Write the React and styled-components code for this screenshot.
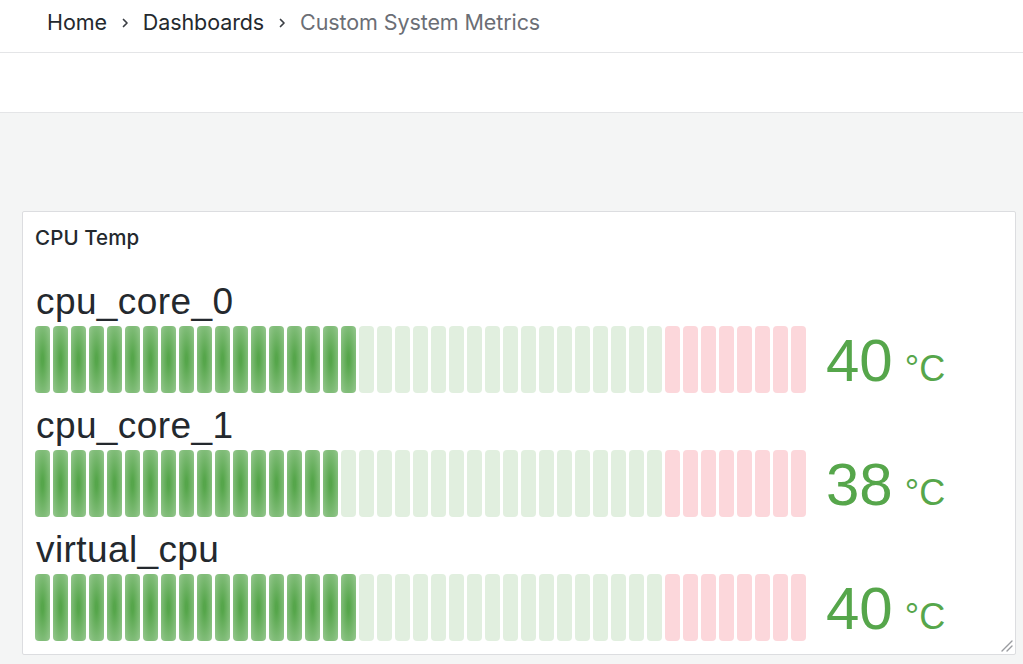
import React from "react";
import styled, { createGlobalStyle } from "styled-components";

const Global = createGlobalStyle`
  html, body { margin: 0; padding: 0; background: #f4f5f5; overflow: hidden; }
  body { font-family: Inter, "Liberation Sans", sans-serif; color: #24292e; }
  * { box-sizing: border-box; }
`;

const Page = styled.div`
  width: 1023px;
  height: 664px;
  display: flex;
  flex-direction: column;
  background: #f4f5f5;
`;

const TopBar = styled.nav`
  height: 53px;
  background: #fff;
  border-bottom: 1px solid #e4e5e7;
  display: flex;
  align-items: center;
  padding: 0 0 8px 47px;
  gap: 12px;
  font-size: 21.5px;
`;

const Crumb = styled.span`
  color: ${(p) => (p.$current ? "#6b6e75" : "#24292e")};
  letter-spacing: -0.1px;
`;

const Sep = styled.svg`
  width: 12px;
  height: 12px;
  flex: none;
  margin-top: 2px;
`;

const Toolbar = styled.div`
  height: 60px;
  background: #fff;
  border-bottom: 1px solid #e4e5e7;
`;

const Canvas = styled.main`
  flex: 1;
  padding: 98px 7px 9px 22px;
  display: flex;
`;

const Panel = styled.section`
  position: relative;
  flex: 1;
  background: #fff;
  border: 1px solid #dcdde0;
  border-radius: 2px;
  display: flex;
  flex-direction: column;
  padding: 0 12px;
`;

const Title = styled.h2`
  margin: 0;
  height: 50px;
  display: flex;
  align-items: center;
  padding-top: 1px;
  font-size: 20.5px;
  font-weight: 500;
  color: #24292e;
  letter-spacing: 0.1px;
`;

const Rows = styled.div`
  display: flex;
  flex-direction: column;
  padding-top: 20px;
`;

const Row = styled.div`
  display: flex;
  flex-direction: column;
  height: 124px;
`;

const Label = styled.div`
  font-family: "Liberation Sans", Arial, sans-serif;
  font-size: 37px;
  line-height: 40px;
  height: 40px;
  letter-spacing: 0.4px;
  color: #24292e;
  padding-left: 1px;
  margin-bottom: 4px;
`;

const BarLine = styled.div`
  display: flex;
  align-items: center;
  height: 67px;
`;

const Cells = styled.div`
  display: flex;
  gap: 3px;
  height: 67px;
  flex: none;
`;

const Cell = styled.div`
  width: 15px;
  height: 67px;
  border-radius: 4px;
  background: ${(p) =>
    p.$kind === "on"
      ? "radial-gradient(#56a64b 10%, rgba(86,166,75,0.62))"
      : p.$kind === "red"
      ? "rgba(242,73,92,0.22)"
      : "rgba(86,166,75,0.18)"};
`;

const Value = styled.div`
  margin-left: 20px;
  display: flex;
  align-items: baseline;
  color: #56a64b;
  font-family: "Liberation Sans", Arial, sans-serif;
  padding-top: 2px;
`;

const Num = styled.span`
  font-size: 60px;
  line-height: 60px;
`;

const Unit = styled.span`
  font-size: 36px;
  margin-left: 12px;
`;

const Resize = styled.svg`
  position: absolute;
  right: 2px;
  bottom: 2px;
  width: 14px;
  height: 14px;
`;

const TOTAL = 43;
const RED_START = 35;

const data = [
  { name: "cpu_core_0", value: 40, filled: 18 },
  { name: "cpu_core_1", value: 38, filled: 17 },
  { name: "virtual_cpu", value: 40, filled: 18 },
];

function Gauge({ name, value, filled }) {
  return (
    <Row>
      <Label>{name}</Label>
      <BarLine>
        <Cells>
          {Array.from({ length: TOTAL }, (_, i) => (
            <Cell
              key={i}
              $kind={i < filled ? "on" : i >= RED_START ? "red" : "off"}
            />
          ))}
        </Cells>
        <Value>
          <Num>{value}</Num>
          <Unit>°C</Unit>
        </Value>
      </BarLine>
    </Row>
  );
}

const Chevron = () => (
  <Sep viewBox="0 0 12 12">
    <path d="M4.5 2.5 L8 6 L4.5 9.5" fill="none" stroke="#3b3f45" strokeWidth="1.7" strokeLinecap="round" strokeLinejoin="round" />
  </Sep>
);

export default function App() {
  return (
    <>
      <Global />
      <Page>
        <TopBar>
          <Crumb>Home</Crumb>
          <Chevron />
          <Crumb>Dashboards</Crumb>
          <Chevron />
          <Crumb $current>Custom System Metrics</Crumb>
        </TopBar>
        <Toolbar />
        <Canvas>
          <Panel>
            <Title>CPU Temp</Title>
            <Rows>
              {data.map((d) => (
                <Gauge key={d.name} {...d} />
              ))}
            </Rows>
            <Resize viewBox="0 0 14 14">
              <path d="M13 3 L3 13 M13 8 L8 13" stroke="#9a9ca0" strokeWidth="1.4" strokeLinecap="round" />
            </Resize>
          </Panel>
        </Canvas>
      </Page>
    </>
  );
}
